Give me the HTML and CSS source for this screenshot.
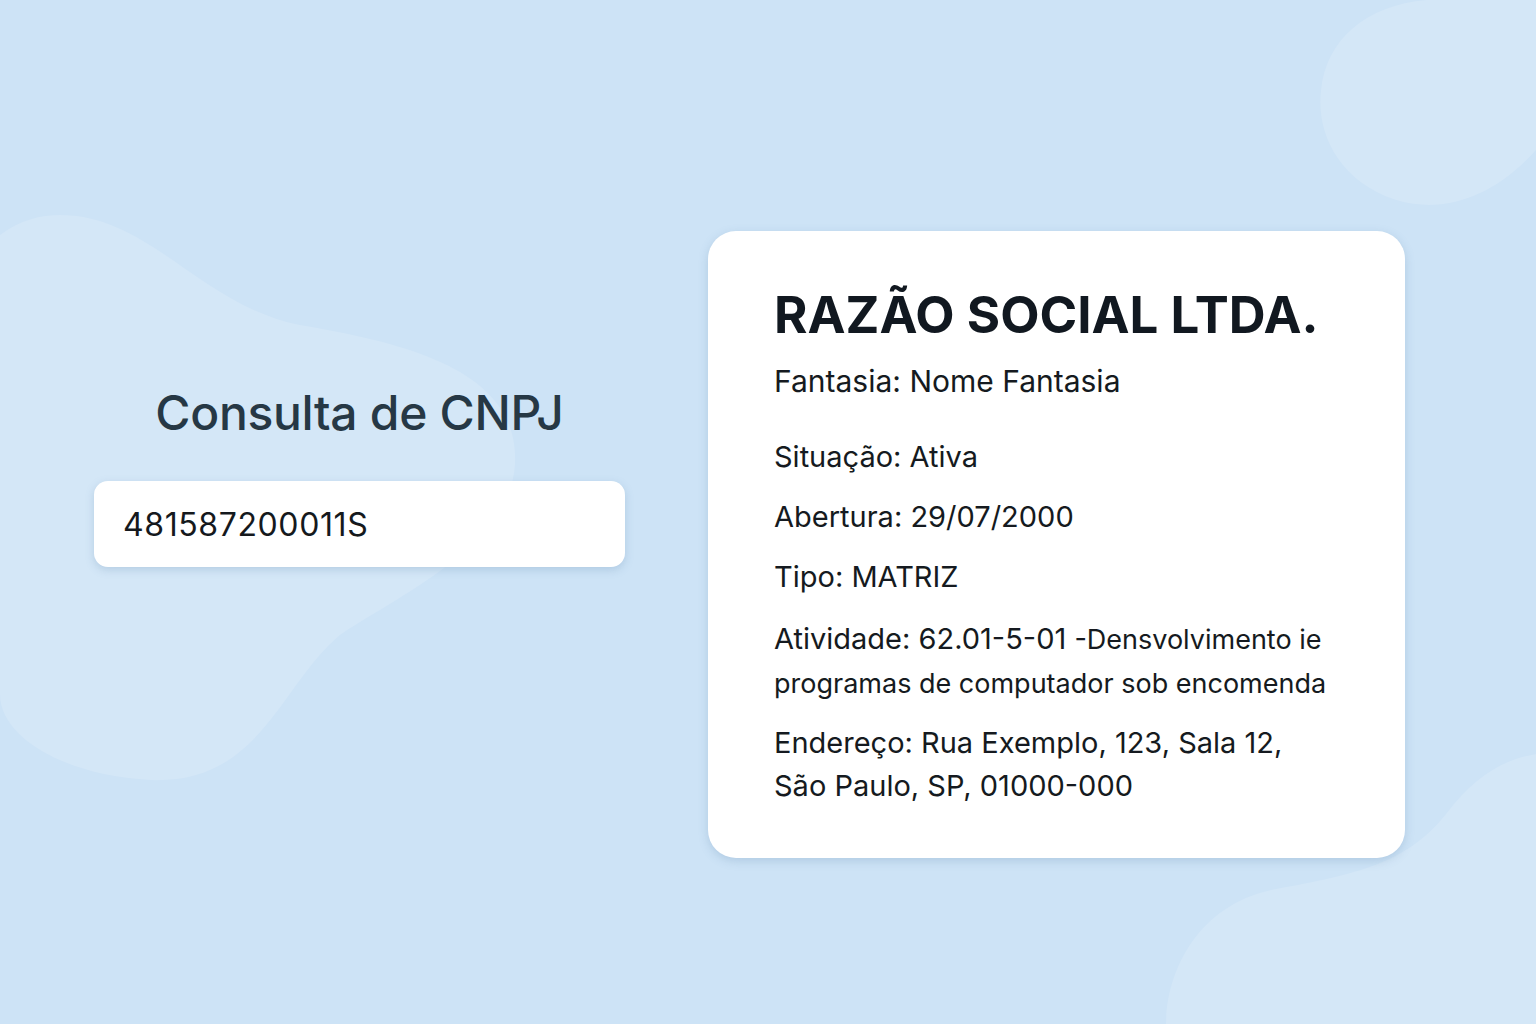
FILE: index.html
```html
<!DOCTYPE html>
<html lang="pt-BR">
<head>
<meta charset="utf-8">
<title>Consulta de CNPJ</title>
<link rel="stylesheet" href="styles.css">
</head>
<body>
<div class="bg">
  <svg class="blob blob-left" viewBox="0 0 520 570" aria-hidden="true"><path d="M60 0 C150 0 200 90 300 110 C420 130 520 160 515 250 C510 330 400 380 340 420 C280 470 260 570 150 565 C60 560 0 520 0 480 L0 20 C20 5 40 0 60 0 Z"/></svg>
  <svg class="blob blob-tr" viewBox="0 0 220 210" aria-hidden="true"><path d="M110 0 L220 0 L220 150 C180 195 130 215 80 200 C20 180 0 130 5 90 C10 40 50 5 110 0 Z"/></svg>
  <svg class="blob blob-br" viewBox="0 0 370 270" aria-hidden="true"><path d="M370 0 L370 270 L0 270 C0 220 30 150 110 135 C190 120 240 110 280 60 C310 20 340 5 370 0 Z"/></svg>
</div>
<main class="page">
  <section class="search">
    <h1 class="search-title">Consulta de CNPJ</h1>
    <div class="search-box">
      <input class="search-input" type="text" value="481587200011S" aria-label="CNPJ">
    </div>
  </section>
  <section class="card">
    <h2 class="card-title">RAZÃO SOCIAL LTDA.</h2>
    <p class="card-sub">Fantasia: Nome Fantasia</p>
    <p class="row">Situação: Ativa</p>
    <p class="row">Abertura: 29/07/2000</p>
    <p class="row">Tipo: MATRIZ</p>
    <p class="row row-multi">Atividade: 62.01-5-01 <span class="small">-Densvolvimento ie programas de computador sob encomenda</span></p>
    <p class="row row-multi">Endereço: Rua Exemplo, 123, Sala 12,<br>São Paulo, SP, 01000-000</p>
  </section>
</main>
</body>
</html>
```

FILE: styles.css
```css
html, body {
  margin: 0;
  padding: 0;
}
body {
  width: 1536px;
  height: 1024px;
  overflow: hidden;
  background: #cde3f6;
  font-family: Inter, "Noto Sans", sans-serif;
  position: relative;
}
.bg {
  position: absolute;
  inset: 0;
  pointer-events: none;
}
.blob {
  position: absolute;
  fill: rgba(255, 255, 255, 0.14);
}
.blob-left {
  left: 0;
  top: 215px;
  width: 520px;
  height: 570px;
}
.blob-tr {
  right: 0;
  top: 0;
  width: 220px;
  height: 210px;
}
.blob-br {
  right: 0;
  bottom: 0;
  width: 370px;
  height: 270px;
}
.page {
  position: relative;
  display: flex;
  align-items: flex-start;
  gap: 83px;
  padding: 231px 0 0 94px;
}
.search {
  width: 531px;
  padding-top: 154px;
  display: flex;
  flex-direction: column;
  align-items: center;
}
.search-title {
  margin: 0 0 40px;
  font-size: 48px;
  line-height: 56px;
  font-weight: 500;
  color: #263845;
  letter-spacing: -0.3px;
}
.search-box {
  width: 100%;
  height: 86px;
  background: #fff;
  border-radius: 14px;
  box-shadow: 0 3px 8px rgba(90, 130, 170, 0.25);
  display: flex;
  align-items: center;
}
.search-input {
  border: 0;
  outline: 0;
  background: transparent;
  width: 100%;
  padding: 0 29px;
  font-family: Inter, "Noto Sans", sans-serif;
  font-size: 32px;
  letter-spacing: 0.6px;
  color: #15191d;
}
.card {
  width: 697px;
  height: 627px;
  box-sizing: border-box;
  background: #fff;
  border-radius: 28px;
  padding: 52px 50px 0 66px;
  box-shadow: 0 3px 10px rgba(90, 130, 170, 0.25);
  color: #151a20;
}
.card-title {
  margin: 0;
  font-size: 51px;
  line-height: 64px;
  font-weight: 700;
  letter-spacing: 0;
  color: #111820;
  white-space: nowrap;
}
.card-sub {
  margin: 14px 0 36px;
  font-size: 30px;
  line-height: 40px;
}
.row {
  margin: 0 0 20px;
  font-size: 29px;
  line-height: 40px;
}
.row-multi {
  line-height: 43px;
  margin-bottom: 16px;
}
.small {
  font-size: 27px;
}
```
